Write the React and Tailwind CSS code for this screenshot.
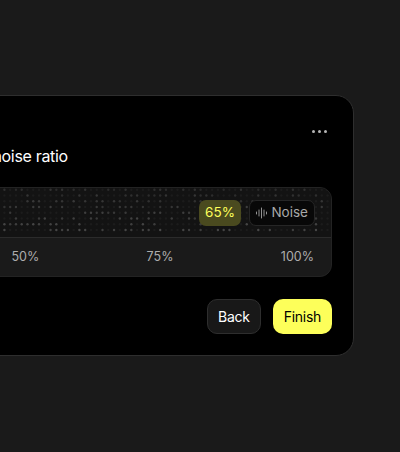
import React from 'react';

const FONT = { fontFamily: 'Inter, "Noto Sans", sans-serif' };

/* dots behind the noise strip, seeded so every render is the same */
const NoiseDots = () => {
  const dots = [];
  for (let row = 0; row < 8; row++) {
    for (let col = 0; col < 70; col++) {
      const n = Math.abs(Math.sin((col + 1) * 12.9898 + (row + 1) * 78.233) * 43758.5453) % 1;
      const fade = 0.03 + (row / 7) * 0.09;
      const opacity = n > 0.55 ? fade + n * 0.11 : 0.04;
      dots.push(
        <circle key={`${row}-${col}`} cx={col * 5.77 + 2.4} cy={row * 5.75 + 2.8} r="1.2" fill="#fff" opacity={opacity} />
      );
    }
  }
  return (
    <svg className="absolute bottom-0 right-0 h-[50px] w-[404px]" viewBox="0 0 404 50">
      {dots}
    </svg>
  );
};

const WaveIcon = () => (
  <svg width="11" height="12" viewBox="0 0 11 12" stroke="#a3a3a3" strokeWidth="0.9" strokeLinecap="round">
    <path d="M0.5 5v2M3 3v6M5.5 1v10M8 3v6M10.5 5v2" />
  </svg>
);

export default function App() {
  return (
    <div className="flex h-[452px] w-[400px] justify-end overflow-hidden bg-[#1a1a1a] pt-[95px] pr-[46px]" style={FONT}>
      <div className="flex h-[261px] w-[645px] shrink-0 flex-col rounded-[18px] border-[1.5px] border-[#2e2e2e] bg-black px-[21px]">
        <div className="flex h-[37px] items-end justify-end gap-[3px] pr-[5px]">
          <span className="h-[3px] w-[3px] rounded-full bg-[#b5b5b5]" />
          <span className="h-[3px] w-[3px] rounded-full bg-[#b5b5b5]" />
          <span className="h-[3px] w-[3px] rounded-full bg-[#b5b5b5]" />
        </div>

        <h2 className="mt-[11px] ml-[189px] text-base leading-6 font-normal tracking-[-0.02em] text-white">Signal-to-noise ratio</h2>

        <div className="mt-[19px] overflow-hidden rounded-xl border border-[#232323] bg-[#1a1a1a]">
          <div className="relative flex h-[50px] items-center justify-end gap-2 border-b border-[#2b2b2b] bg-[#131313] pr-[16px]">
            <NoiseDots />
            <span className="relative flex h-[26px] items-center rounded-[7px] bg-[#4a4a1f] px-[6.5px] text-[13.5px] text-[#fdff5a]">65%</span>
            <span className="relative flex h-[26px] items-center gap-[4px] rounded-[7px] border border-[#262626] bg-[#080808] px-[6px] text-[13.5px] text-[#a8a8a8]">
              <WaveIcon />
              Noise
            </span>
          </div>
          <div className="flex h-[38px] items-center justify-between px-[17px] text-[12.5px] text-[#adadad]">
            <span>0%</span>
            <span>25%</span>
            <span>50%</span>
            <span>75%</span>
            <span>100%</span>
          </div>
        </div>

        <div className="mt-[22px] flex justify-end gap-3">
          <button type="button" className="h-[35px] rounded-[10px] border border-[#2e2e2e] bg-[#181818] px-[10px] text-sm tracking-[-0.02em] text-white">
            Back
          </button>
          <button type="button" className="h-[35px] rounded-[10px] bg-[#fdff5a] px-[11px] text-sm tracking-[-0.02em] text-black">
            Finish
          </button>
        </div>
      </div>
    </div>
  );
}
